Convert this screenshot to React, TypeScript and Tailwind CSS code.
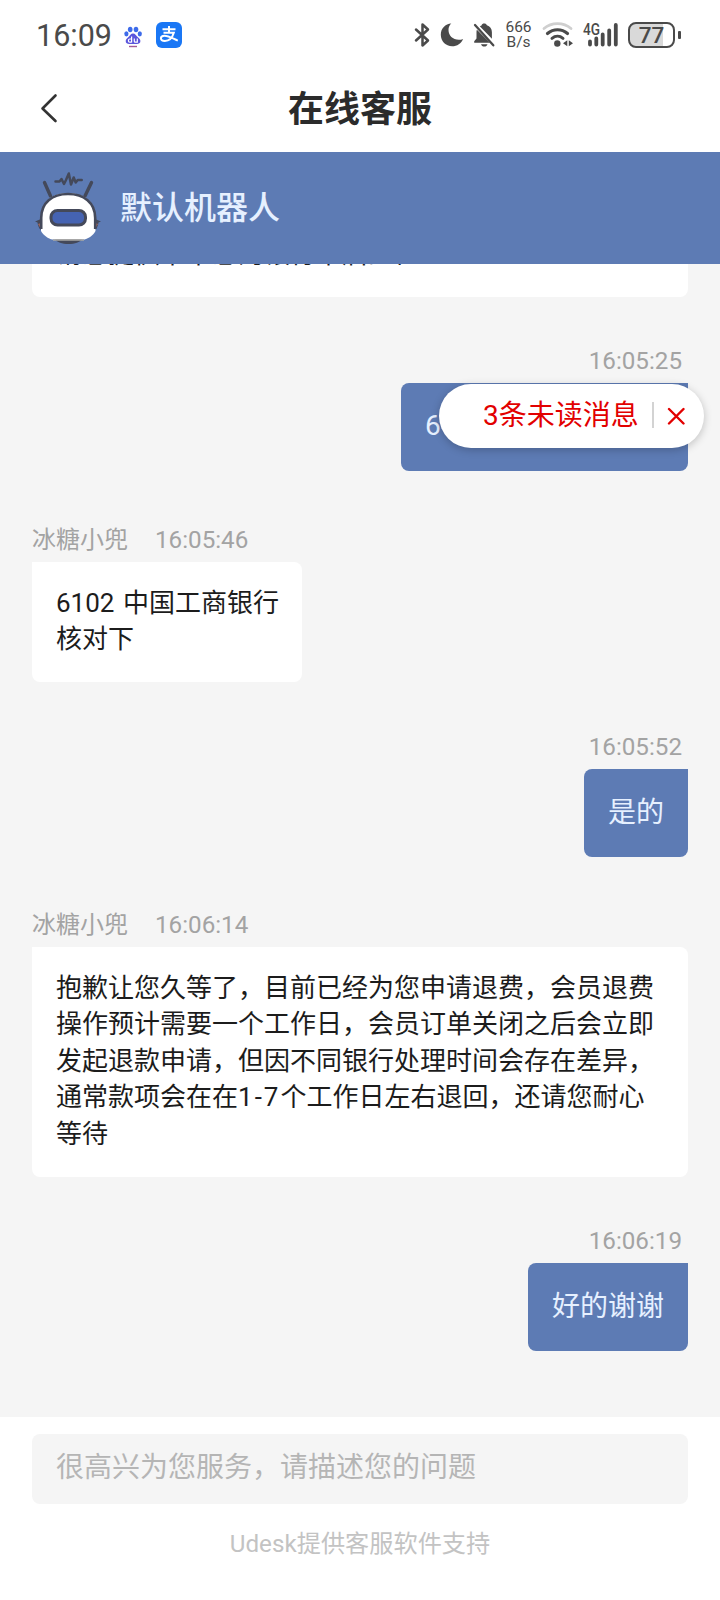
import React from 'react';

type Message = {
  from: 'agent' | 'user';
  time: string;
  text: React.ReactNode;
  className: string;
  bubble: string;
};

const messages: Message[] = [
  { from: 'user', time: '16:05:25', text: '6102', className: 'mt-[46px]', bubble: 'w-[287px] pt-[23px]' },
  { from: 'agent', time: '16:05:46', text: '6102 中国工商银行核对下', className: 'mt-[51px]', bubble: 'w-[270px] h-[120px] pr-5 [word-spacing:2px]' },
  { from: 'user', time: '16:05:52', text: '是的', className: 'mt-[47px]', bubble: 'pt-[24px] pr-6' },
  {
    from: 'agent',
    time: '16:06:14',
    text: (
      <>
        抱歉让您久等了，目前已经为您申请退费，会员退费操作预计需要一个工作日，会员订单关闭之后会立即发起退款申请，但因不同银行处理时间会存在差异，通常款项会在在
        <span className="tracking-[2px]">1-7</span>
        个工作日左右退回，还请您耐心等待
      </>
    ),
    className: 'mt-[50px]',
    bubble: 'w-full h-[230px] pr-6',
  },
  { from: 'user', time: '16:06:19', text: '好的谢谢', className: 'mt-[46px]', bubble: 'pt-[24px] pr-6' },
];

function StatusBar() {
  return (
    <div className="flex h-[70px] shrink-0 items-center pl-[36px] pr-[39px] text-[#4a4a4a]">
      <span className="w-[77px] pt-px text-[30.5px] leading-[40px]">16:09</span>
      <svg className="mt-[3px] ml-[11px] h-[24px] w-[18px]" viewBox="0 0 18 24">
        <g fill="#3d6bea">
          <ellipse cx="6.200" cy="4.500" rx="2.300" ry="2.800" />
          <ellipse cx="12" cy="4.500" rx="2.300" ry="2.800" />
          <ellipse cx="2.400" cy="8.800" rx="2.100" ry="2.600" />
          <ellipse cx="15.800" cy="8.800" rx="2.100" ry="2.600" />
        </g>
        <path d="M9 8.500c2.300 0 3 2 4.400 3.200 1.500 1.300 3 2.300 3 4.300 0 2.200-1.700 3-3.400 3H5.200c-1.800 0-3.500-.8-3.500-3 0-2 1.700-3 3-4.300C6.100 10.500 6.700 8.500 9 8.500z" fill="#5b55dc" />
        <path d="M7.600 11.500v6M7.600 14H5.800c-1 0-1.400.7-1.400 1.700s.4 1.500 1.400 1.500h1.800M10.300 13.500v2.700c0 .7.4 1 1 1h2v-3.700" fill="none" stroke="#fff" strokeWidth="1.200" />
        <path d="M5 21.500h8" stroke="#a25a96" strokeWidth="1.400" />
      </svg>
      <span className="ml-[14px] flex h-[26px] w-[26px] items-center justify-center rounded-[6px] bg-[#1a77f5]">
        <svg className="h-[20px] w-[20px]" viewBox="0 0 20 20" fill="none" stroke="#fff" strokeWidth="2">
          <path d="M3.500 4.200h13M10 1v6.500M4.500 7.800h10.300c-1.200 4-4 8.200-8.900 8.200-2.600 0-4-1.100-4-2.700 0-1.500 1.300-2.500 3.600-2.500 4.200 0 8 2.600 13.300 4.800" />
        </svg>
      </span>

      <div className="ml-auto flex items-center">
        <svg className="h-[26px] w-[17px]" viewBox="0 0 17 26" fill="none" stroke="#4a4a4a" strokeWidth="2.500" strokeLinejoin="round" strokeLinecap="round">
          <path d="M2 7.500l12 11-5.500 5V2.500l5.500 5L2 18.500" />
        </svg>
        <svg className="ml-[9px] h-[26px] w-[24px]" viewBox="0 0 24 26" fill="#4a4a4a">
          <path d="M11.300 1.600C5.300 2 .8 6.600.8 12.700c0 6.400 5 11.500 11.300 11.500 5 0 9.300-2.900 11-7.300-1.500.6-2.800.8-4.200.8-6.200 0-10.400-4.400-10.400-9.800 0-2.400.9-4.600 2.800-6.300z" />
        </svg>
        <svg className="ml-[9px] h-[26px] w-[22px]" viewBox="0 0 22 26" fill="#4a4a4a">
          <path d="M8.500 3.500c.5-1.500 1.300-2 2.700-2s2.200.5 2.700 1.700c3 1 5 3.600 5 7v6.600L6.800 4.300z" />
          <path d="M3.900 7.800L17 20.800H1.200v-1.600l2.300-2.700V10c0-.8.1-1.500.4-2.200zM8 22.300h6.500c-.5 1.500-1.600 2.300-3.200 2.300S8.600 23.800 8 22.300z" />
          <path d="M2 3l18.300 20.300" stroke="#4a4a4a" strokeWidth="2.300" strokeLinecap="round" />
        </svg>
        <div className="ml-[10px] flex w-[27px] flex-col items-center text-[15.5px] leading-[15px]">
          <span>666</span>
          <span>B/s</span>
        </div>
        <svg className="ml-[10px] h-[26px] w-[31px]" viewBox="0 0 31 26" fill="none" strokeLinecap="round">
          <path d="M2 6.500c7.500-6.500 19.500-6.500 27 0" stroke="#cfcfcf" strokeWidth="2.800" />
          <path d="M5.500 11.500c6-5 14-5 20 0" stroke="#4a4a4a" strokeWidth="3.200" />
          <path d="M10 16.300c3.300-2.700 7.700-2.700 11 0" stroke="#4a4a4a" strokeWidth="3" />
          <circle cx="15.300" cy="21.500" r="3.200" fill="#4a4a4a" />
          <path d="M25.300 18.200v6L21 21.200zM26.800 18.200v6l4.200-3z" fill="#4a4a4a" />
        </svg>
        <svg className="ml-[10px] h-[26px] w-[36px] overflow-visible" viewBox="0 0 36 26">
          <text x="0" y="12.500" fontSize="16" fontWeight="500" textLength="17" lengthAdjust="spacingAndGlyphs" fill="#4a4a4a">4G</text>
          <path d="M7 19.500v3M13.300 16.500v6M19.700 12.500v10M26.200 8.500v14M32.800 3v19.500" fill="none" stroke="#4a4a4a" strokeWidth="3.800" strokeLinecap="round" />
        </svg>
        <div className="ml-[9px] flex h-[26px] w-[47px] items-center justify-center rounded-[8px] border-2 border-[#4a4a4a] bg-linear-to-r from-[#d9d9d9] from-77% to-white to-77%">
          <span className="text-[22.5px] leading-[22px] font-medium">77</span>
        </div>
        <span className="ml-[3px] h-[8px] w-[3px] rounded-[1px] bg-[#4a4a4a]" />
      </div>
    </div>
  );
}

function RobotAvatar() {
  return (
    <svg className="-mt-[3px] h-[74px] w-[68px]" viewBox="0 0 68 74" fill="none">
      <path d="M21.500 11.500h4l2-2.500 2.500 5 2-4 2.800-6.500 2.200 11 2.700-7 2 5 2-2.500h4" stroke="#44495a" strokeWidth="2.500" strokeLinejoin="round" strokeLinecap="round" />
      <path d="M10.500 12.500l6 13.500M57.500 12.500l-6.500 13.500" stroke="#44495a" strokeWidth="3.400" strokeLinecap="round" />
      <path d="M1 51.500l6-2.500v11c-2-1.500-3-4-3.500-7.500zM67 51.500l-6-2.500v11c2-1.500 3-4 3.500-7.500z" fill="#44495a" />
      <path d="M4 54l3-1v6zM64 54l-3-1v6z" fill="#a3685f" />
      <path d="M21 69h27c-2 3.500-7 5-13.500 5S23 72.500 21 69z" fill="#44495a" />
      <path d="M7 61V47c0-15 11-24 27-24s27.500 9 27.500 24v14c-2 4-7 7.500-11 8.500h-32C14.500 69 9 65 7 61z" fill="#fff" />
      <path d="M7.200 59V48c0-15.500 11-24 26.800-24s27.200 8.500 27.200 24v11" stroke="#44495a" strokeWidth="2.600" />
      <path d="M19 70h31" stroke="#a9a9a6" strokeWidth="1.500" />
      <rect x="17" y="40.500" width="34.500" height="14.500" rx="6.500" fill="#4563b2" stroke="#44495a" strokeWidth="3" />
    </svg>
  );
}

function UnreadBanner() {
  return (
    <div className="absolute top-[120px] right-4 flex h-16 w-[265px] items-center rounded-full bg-white pl-[44px] text-[#e20000] shadow-[0_2px_8px_rgba(0,0,0,0.22)]">
      <span className="w-[156px] text-[28px] leading-[40px] whitespace-nowrap">3条未读消息</span>
      <span className="-mt-0.5 ml-[13px] h-[26px] w-[2px] bg-[#d3d3d3]" />
      <svg className="ml-[13px] h-[18px] w-[18px]" viewBox="0 0 18 18" fill="none" stroke="#e20000" strokeWidth="2.400" strokeLinecap="round">
        <path d="M2 2l14.500 14.500M16.500 2L2 16.500" />
      </svg>
    </div>
  );
}

function ChatMessage({ message }: { message: Message }) {
  if (message.from === 'user') {
    return (
      <div className={`flex flex-col items-end ${message.className}`}>
        <time className="mr-[6px] text-[24.2px] leading-[36px] text-[#a3a3a3]">{message.time}</time>
        <div className={`mt-1 h-[88px] rounded-lg rounded-tr-none bg-[#5d7bb4] pl-6 text-[28px] leading-[40px] text-[#e6f0ff] ${message.bubble}`}>
          {message.text}
        </div>
      </div>
    );
  }

  return (
    <div className={`flex flex-col items-start ${message.className}`}>
      <div className="flex text-[24px] leading-[36px] text-[#a3a3a3]">
        <span className="mr-[27px]">冰糖小兜</span>
        <time className="text-[24.2px]">{message.time}</time>
      </div>
      <div className={`mt-1 rounded-lg rounded-tl-none bg-white pl-6 pt-[23px] text-[26px] leading-[36.4px] text-[#1c1c1c] ${message.bubble}`}>
        {message.text}
      </div>
    </div>
  );
}

export default function App() {
  return (
    <div className="flex h-[1600px] w-[720px] flex-col overflow-hidden bg-white font-[Roboto,'Noto_Sans_CJK_SC',sans-serif]">
      <StatusBar />

      <header className="grid h-[82px] shrink-0 grid-cols-[96px_1fr_96px] items-center pb-[3px]">
        <svg className="-mt-[3px] ml-[40px] h-[30px] w-[18px]" viewBox="0 0 18 30" fill="none" stroke="#333" strokeWidth="2.600" strokeLinecap="round" strokeLinejoin="round">
          <path d="M15.500 2.500L2.500 15.500l13 12.500" />
        </svg>
        <h1 className="text-center text-[36px] leading-[48px] font-bold text-[#2b2b2b]">在线客服</h1>
      </header>

      <div className="flex h-[112px] shrink-0 items-center bg-[#5d7bb4] pl-[34px]">
        <RobotAvatar />
        <span className="ml-[18px] text-[32px] leading-[48px] font-medium text-[#e6f0ff]">默认机器人</span>
      </div>

      <main className="relative flex h-[1153px] shrink-0 flex-col overflow-hidden bg-[#f5f5f5] px-8">
        <div className="flex h-[33px] shrink-0 items-end overflow-hidden rounded-b-lg bg-white px-6 pb-[25px] text-[26px] leading-[36.4px] text-[#1c1c1c]">
          请您提供下下您的银行卡后四位
        </div>
        {messages.map((message) => (
          <ChatMessage key={message.time} message={message} />
        ))}
        <UnreadBanner />
      </main>

      <footer className="flex flex-col items-center px-8 pt-[17px]">
        <input
          className="h-[70px] w-full rounded-lg bg-[#f5f5f5] px-6 pb-[3px] text-[28px] outline-none placeholder:text-[#b5b5b5]"
          placeholder="很高兴为您服务，请描述您的问题"
        />
        <p className="mt-[22px] text-[24.2px] leading-[36px] text-[#c3c3c3]">Udesk提供客服软件支持</p>
      </footer>
    </div>
  );
}
